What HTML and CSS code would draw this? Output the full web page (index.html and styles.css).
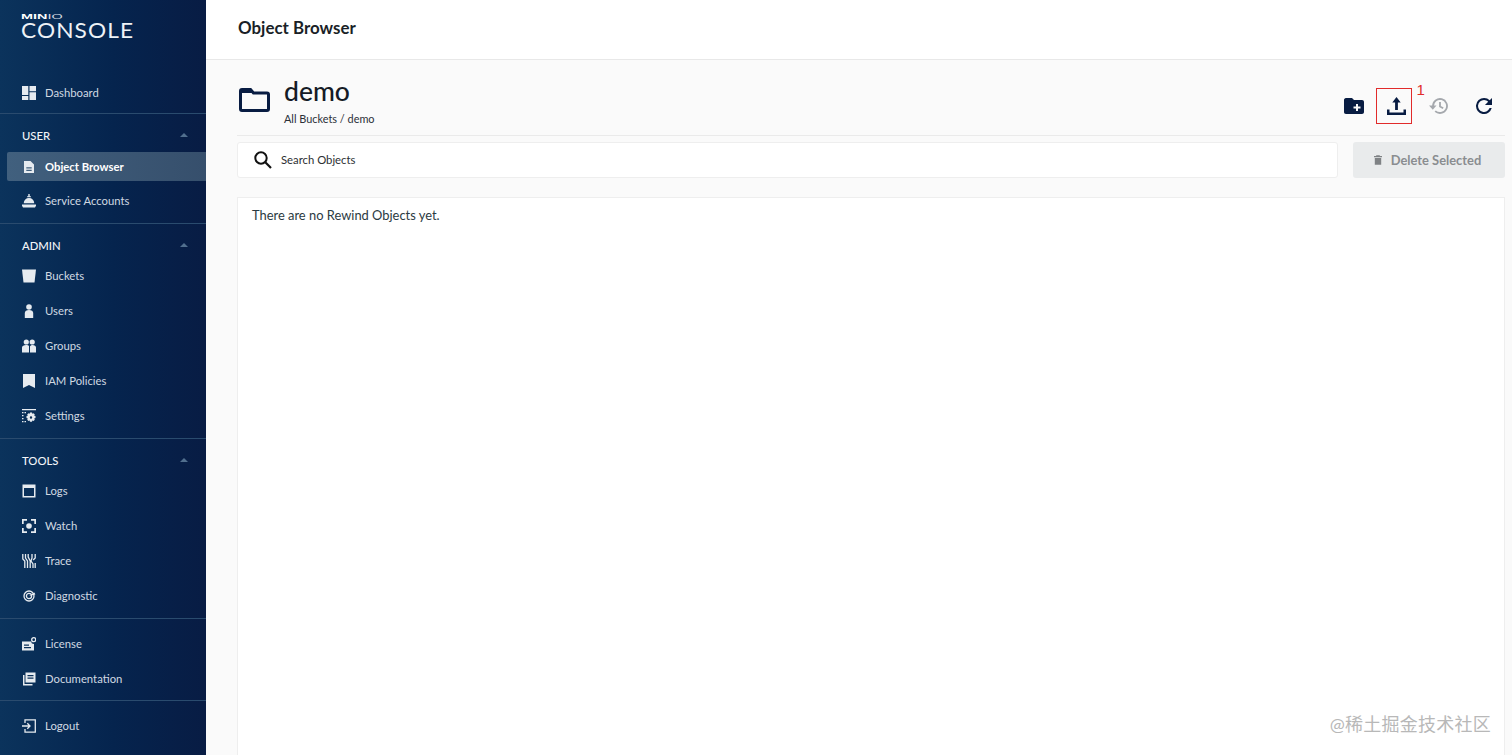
FILE: index.html
```html
<!DOCTYPE html>
<html lang="en">
<head>
<meta charset="utf-8">
<title>MinIO Console</title>
<link rel="stylesheet" href="styles.css">
</head>
<body>
<div class="app">
  <aside class="sidebar">
    <div class="logo">
      <div class="logo-top"><b>MIN</b><span>IO</span></div>
      <div class="logo-name">CONSOLE</div>
    </div>
    <section class="group first">
      <a class="item"><svg class="ico" viewBox="0 0 14 14"><path d="M0 0h6.300v9H0zM7.500 0H14v5.200H7.500zM7.500 6.300H14V14H7.500zM0 10h6.300v4H0z"/></svg>Dashboard</a>
    </section>
    <section class="group">
      <div class="heading"><span>USER</span><i class="caret"></i></div>
      <a class="item active"><svg class="ico" viewBox="0 0 14 14"><path fill-rule="evenodd" d="M2 1h6.500L12 4.500V13H2zM4.300 7.300v1.200h5.400V7.300zM4.300 9.800V11h5.400V9.800z"/></svg>Object Browser</a>
      <a class="item"><svg class="ico" viewBox="0 0 14 14"><path d="M6.300 0h1.400v2.200h1.200v1H5.100v-1h1.200zM7 4c3 0 5 2 5.300 5.300H1.700C2 6 4 4 7 4zM0 10.500h14v1.200l-1 1.800H1L0 11.700z"/></svg>Service Accounts</a>
    </section>
    <section class="group">
      <div class="heading"><span>ADMIN</span><i class="caret"></i></div>
      <a class="item"><svg class="ico" viewBox="0 0 14 14"><path d="M0 .500h14l-1.500 13h-11z"/></svg>Buckets</a>
      <a class="item"><svg class="ico" viewBox="0 0 14 14"><circle cx="7" cy="3" r="2.800"/><path d="M2.800 14V9c0-2 1.700-3 4.200-3s4.200 1 4.200 3v5z"/></svg>Users</a>
      <a class="item"><svg class="ico" viewBox="0 0 14 14"><circle cx="4.300" cy="3" r="2.600"/><circle cx="10.200" cy="3" r="2.600"/><path d="M0 13.500V8.500C0 7 1.800 6 4.200 6c1.300 0 2.200.3 2.800 1v6.500zM8 13.500V7.500c.5-1 1.300-1.500 2.500-1.500C12.500 6 14 7 14 8.500v5z"/></svg>Groups</a>
      <a class="item"><svg class="ico" viewBox="0 0 14 14"><path d="M1 0h12v14L7 11 1 14z"/></svg>IAM Policies</a>
      <a class="item"><svg class="ico" viewBox="0 0 14 14"><path d="M0 0h14v1.200H0zM0 3h1.500v1.200H0zM2.500 3h1.500v1.200H2.500zM0 6h1.500v1.200H0zM0 9h1.500v1.200H0zM0 12h1.500v1.200H0zM2.500 12h1.500v1.200H2.500z"/><path fill-rule="evenodd" d="M8 3.500h2l.3 1.300 1.200-.6 1.300 1.300-.6 1.200 1.300.4v2l-1.300.4.600 1.200-1.300 1.300-1.200-.6-.3 1.300H8l-.3-1.300-1.200.6-1.300-1.300.6-1.200-1.300-.4v-2l1.300-.4-.6-1.200 1.300-1.300 1.200.6zM9 7.300a1.200 1.200 0 1 0 0 2.400 1.200 1.200 0 0 0 0-2.400z"/></svg>Settings</a>
    </section>
    <section class="group">
      <div class="heading"><span>TOOLS</span><i class="caret"></i></div>
      <a class="item"><svg class="ico" viewBox="0 0 14 14"><path fill-rule="evenodd" d="M.500.500h13v13H.500zM2 4v8h10V4z"/></svg>Logs</a>
      <a class="item"><svg class="ico" viewBox="0 0 14 14"><circle cx="7" cy="7" r="2.800"/><path d="M0 0h5v1.700H1.700V5H0zM9 0h5v5h-1.700V1.700H9zM0 9h1.700v3.300H5V14H0zM12.300 9H14v5H9v-1.700h3.300z"/></svg>Watch</a>
      <a class="item"><svg class="ico" viewBox="0 0 14 14"><path class="stroke" d="M.800 0v5l2 2v7M3.500 0v4l2 3v7M6.200 0v3l2 4v7M10 0v4l-1 3 2 3v4M13.200 0v4l-2 2M13.200 9v5"/></svg>Trace</a>
      <a class="item"><svg class="ico" viewBox="0 0 14 14"><circle class="stroke" cx="7" cy="7" r="5"/><circle class="stroke" cx="7" cy="7" r="2.600"/><path d="M7 7l5.500-3.500.8 2z"/></svg>Diagnostic</a>
    </section>
    <section class="group docs">
      <a class="item"><svg class="ico" viewBox="0 0 14 14"><path d="M0 4.500h9a3 3 0 0 0 3 2.500v6.500H0zM2 7.500v1.200h5V7.500zM2 10v1.200h7V10z" fill-rule="evenodd"/><circle class="stroke" cx="11.700" cy="2.700" r="2"/></svg>License</a>
      <a class="item"><svg class="ico" viewBox="0 0 14 14"><path fill-rule="evenodd" d="M3.500 .500H13.500v10H3.500zM5.500 3v1.200h6V3zM5.500 5.500v1.200h6V5.500z"/><path d="M1 3h1.500v9h8v1.500H1z"/></svg>Documentation</a>
    </section>
    <section class="group last">
      <a class="item"><svg class="ico" viewBox="0 0 14 14"><path class="stroke" d="M3 4V.800h10.300v12.400H3V10M0 7h8M5.300 4.300L8 7 5.300 9.700"/></svg>Logout</a>
    </section>
  </aside>

  <main class="main">
    <header class="topbar"><h1>Object Browser</h1></header>
    <div class="content">
      <div class="bucket-row">
        <div class="bucket-title">
          <svg class="folder" viewBox="0 0 31 24"><path class="folder-line" d="M1.500 3c0-1 .6-1.500 1.500-1.500h8.500l3 3.500H28c1 0 1.500.6 1.500 1.500V21c0 1-.5 1.500-1.500 1.500H3c-1 0-1.500-.5-1.500-1.500z"/><path class="folder-fill" d="M1.500 1.500h10l3 3.500h-13z"/></svg>
          <div>
            <h2>demo</h2>
            <div class="crumb">All Buckets / demo</div>
          </div>
        </div>
        <div class="actions">
          <button class="act"><svg viewBox="0 0 20 16" class="i-folder"><path fill-rule="evenodd" d="M0 2c0-1 .7-2 2-2h6l2 2h8c1.200 0 2 .8 2 2v10c0 1.200-.8 2-2 2H2c-1.300 0-2-.8-2-2zM12 6v2.500H9.500v2H12V13h2v-2.500h2.500v-2H14V6z"/></svg></button>
          <button class="act marked"><svg viewBox="0 0 19 18" class="i-upload"><path d="M9.500 0l4.200 5.500h-2.800V13H8.100V5.500H5.300zM0 12.500h2.500v3H16.500v-3H19V18H0z"/></svg><span class="mark">1</span></button>
          <button class="act"><svg viewBox="0 0 20 16" class="i-history"><path class="hist-line" d="M4 8a7 7 0 1 1 2.200 5.100"/><path class="hist-fill" d="M0 7.500h7.500L3.800 11.800z"/><path class="hist-line" d="M11 4v4.500l3.200 1.800"/></svg></button>
          <button class="act"><svg viewBox="0 0 18 18" class="i-refresh"><path d="M15.400 2.600A8.900 8.900 0 0 0 9 0a9 9 0 1 0 8.700 11.300h-2.400A6.700 6.700 0 1 1 9 2.300c1.900 0 3.500.8 4.700 2L10.100 8H18V0z"/></svg></button>
        </div>
      </div>
      <div class="tools-row">
        <div class="search">
          <svg viewBox="0 0 18 18" class="i-search"><circle class="search-line" cx="7" cy="7" r="5.700"/><path class="search-line thick" d="M11.300 11.300L17 17"/></svg>
          <span>Search Objects</span>
        </div>
        <button class="delete"><svg viewBox="0 0 10 12" class="i-trash"><path d="M3 0h4l.5 1H10v1.500H0V1h2.500zM1 3.500h8V12H1z"/></svg>Delete Selected</button>
      </div>
      <div class="panel">There are no Rewind Objects yet.</div>
    </div>
  </main>
</div>
<div class="watermark">@稀土掘金技术社区</div>
</body>
</html>
```

FILE: styles.css
```css
* { box-sizing: border-box; }
html, body { margin: 0; height: 755px; overflow: hidden; }
body { font-family: Lato, "Noto Sans CJK SC", sans-serif; background: #fafafa; color: #1f2530; position: relative; }

.app { display: flex; height: 755px; }

.sidebar {
  width: 206px;
  flex: none;
  height: 755px;
  background: linear-gradient(90deg, #0b335c 0%, #05244e 55%, #081c44 100%);
  color: #d5dde6;
  display: flex;
  flex-direction: column;
}
.logo { height: 73px; padding: 13px 0 0 21px; color: #fff; }
.logo-top { font-family: "Liberation Sans", sans-serif; font-size: 8px; line-height: 8px; display: flex; transform: scaleX(1.800); transform-origin: left; }
.logo-top b { font-weight: 700; }
.logo-top span { font-weight: 400; color: #d5dbe2; }
.logo-name { font-weight: 400; font-size: 21px; line-height: 20px; letter-spacing: 1px; margin-top: -1px; color: #eef2f6; transform: scaleX(1.080); transform-origin: left; }

.group { border-bottom: 1px solid #2a4b6e; padding-bottom: 5px; }
.group.first { height: 41px; padding: 2px 0 0; }
.group.docs { padding: 7px 0 4px; height: 82px; }
.group.last { border-bottom: 0; padding-top: 7px; }
.heading {
  height: 34px;
  padding: 8px 18px 0 22px;
  display: flex;
  align-items: center;
  justify-content: space-between;
  font-size: 11.300px;
  color: #f2f5f8;
  font-weight: 500;
}
.caret { width: 0; height: 0; border: 4px solid transparent; border-top: 0; border-bottom: 4px solid #516f8e; }

.item {
  height: 35px;
  display: flex;
  align-items: center;
  padding-left: 22px;
  font-size: 11.300px;
  color: #d0d9e2;
  gap: 9px;
}
.item.active {
  height: 29px;
  margin: 4px 0 2px 7px;
  padding-left: 15px;
  background: linear-gradient(90deg, #41607e, #364f6c);
  color: #fff;
  font-weight: 700;
  border-radius: 2px 0 0 2px;
}
.ico { width: 14px; height: 14px; fill: #e6ebf0; flex: none; }
.stroke { stroke: #e6ebf0; stroke-width: 1.300; fill: none; }

.main { flex: 1; min-width: 0; display: flex; flex-direction: column; }
.topbar { height: 60px; background: #fff; border-bottom: 1px solid #e8e8e8; padding-left: 32px; display: flex; align-items: center; flex: none; }
.topbar h1 { margin: 0 0 4px; font-size: 16.900px; font-weight: 700; color: #1a1f27; }
.content { padding: 0 7px 0 31px; flex: 1; display: flex; flex-direction: column; min-height: 0; }

.bucket-row { height: 76px; flex: none; border-bottom: 1px solid #eaeaea; display: flex; justify-content: space-between; }
.bucket-title { display: flex; padding-left: 2px; gap: 14px; }
.folder { width: 31px; height: 24px; margin-top: 28px; }
.folder-line { fill: none; stroke: #081c42; stroke-width: 3; }
.folder-fill { fill: #081c42; }
.bucket-title h2 { margin: 13px 0 0; font-size: 26.500px; line-height: 36px; font-weight: 500; color: #151b26; }
.crumb { font-size: 10.900px; line-height: 14px; margin-top: 3px; color: #2a3038; }

.actions { display: flex; align-items: flex-start; gap: 8.500px; padding: 28px 3.500px 0 0; }
.act { width: 36px; height: 36px; padding: 0; border: 0; background: none; display: flex; align-items: center; justify-content: center; position: relative; }
.act svg { fill: #081c42; }
.act.marked { margin: 0 1px 0 -4.500px; padding-left: 5px; border: 1px solid #e12b2b; }
.mark { position: absolute; left: 40px; top: -7px; font-size: 15px; color: #e12b2b; font-weight: 300; line-height: 16px; }
.i-folder { width: 20px; height: 16px; }
.i-upload { width: 19px; height: 18px; }
.i-history { width: 20px; height: 16px; }
.i-refresh { width: 16px; height: 16px; }
.act .hist-line { fill: none; stroke: #a5a8ad; stroke-width: 1.800; }
.act .hist-fill { fill: #a5a8ad; }

.tools-row { display: flex; gap: 15px; margin-top: 6px; flex: none; }
.search { flex: 1; height: 36px; background: #fff; border: 1px solid #eeeeee; border-radius: 3px; display: flex; align-items: center; padding: 0 0 1px 16px; font-size: 11.300px; color: #2c2f33; gap: 9px; }
.i-search { width: 18px; height: 18px; }
.search-line { fill: none; stroke: #111; stroke-width: 2; }
.search-line.thick { stroke-width: 2.200; }
.delete { width: 152px; height: 36px; border: 0; border-radius: 3px; background: #e9ebec; color: #8a8d90; font-family: inherit; font-size: 12.900px; font-weight: 700; display: flex; align-items: center; justify-content: center; gap: 9px; padding: 0 3px 0 0; }
.i-trash { width: 8px; height: 10px; fill: #7f8285; }

.panel { margin-top: 19px; flex: 1; background: #fff; border: 1px solid #eeeeee; border-bottom: 0; padding: 9px 14px; font-size: 12.900px; line-height: 16px; color: #2b3a42; }

.watermark { position: absolute; right: 21px; top: 714px; font-size: 18px; line-height: 20px; letter-spacing: .25px; color: #b8b8b8; }
```
